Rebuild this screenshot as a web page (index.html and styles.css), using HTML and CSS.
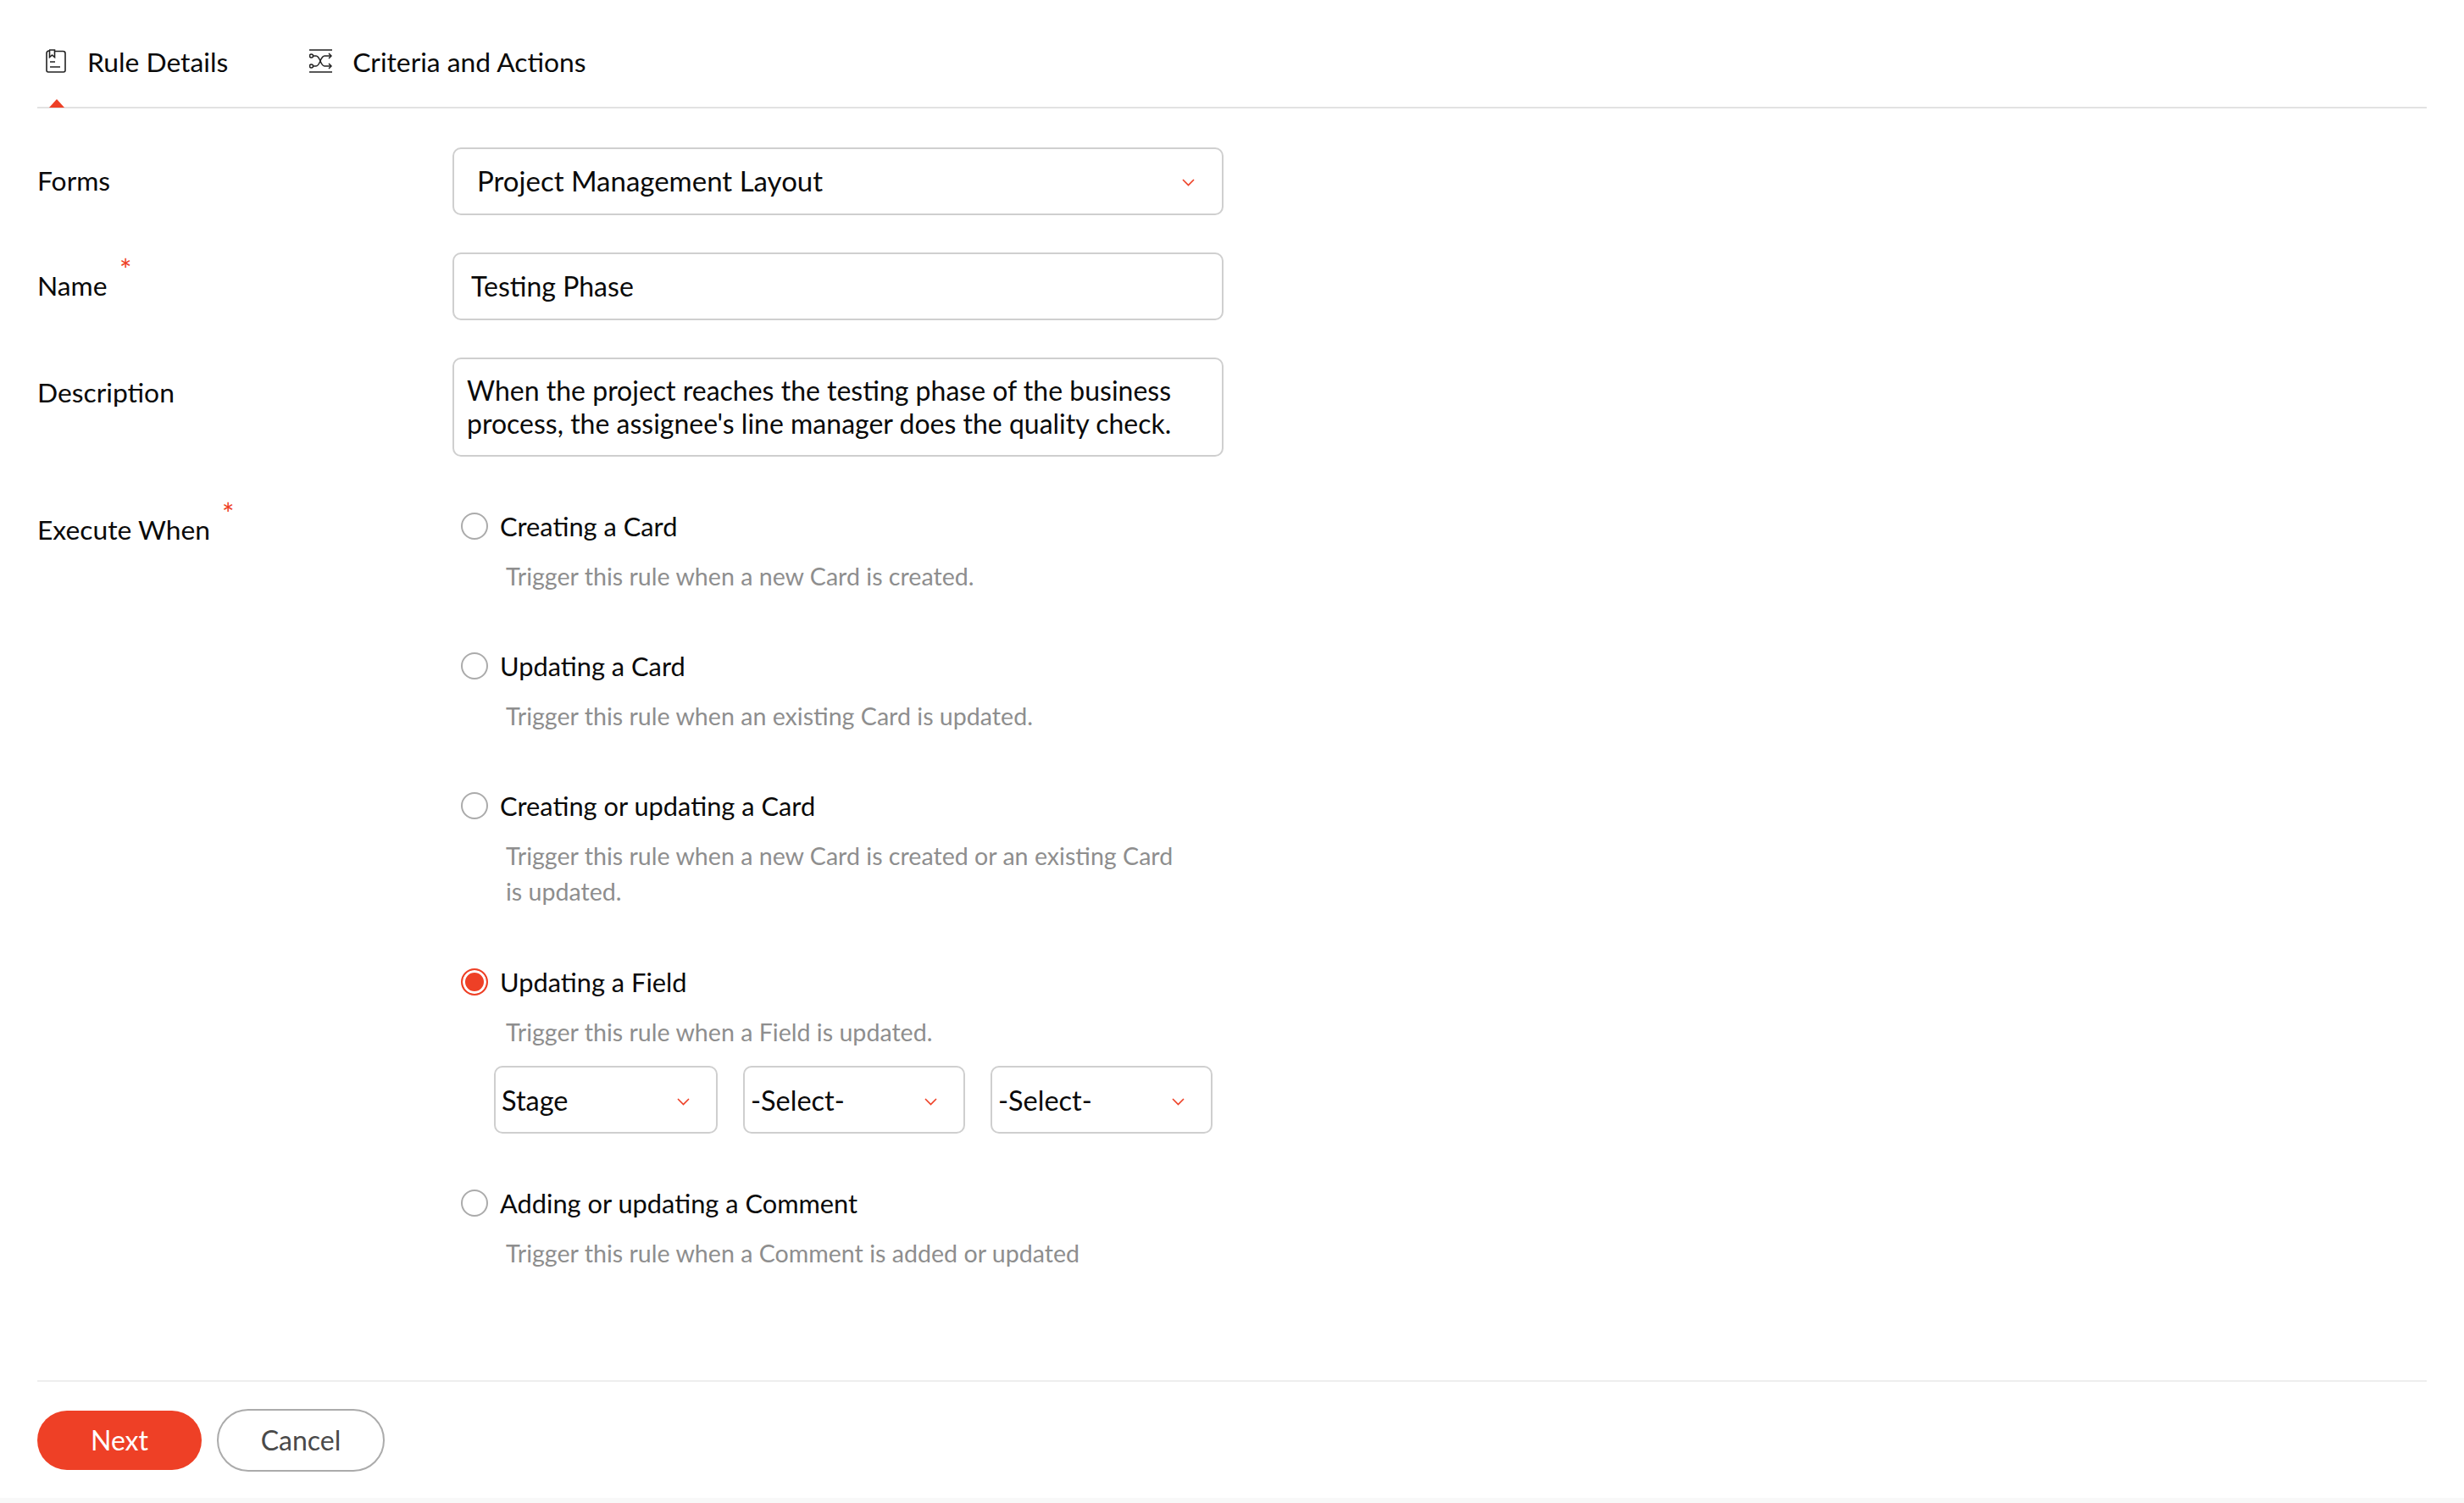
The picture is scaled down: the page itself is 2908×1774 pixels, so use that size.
FILE: index.html
```html
<!DOCTYPE html>
<html lang="en">
<head>
<meta charset="utf-8">
<title>Rule Details</title>
<link rel="stylesheet" href="styles.css">
</head>
<body>
<div class="page">
  <nav class="tabs">
    <div class="tab tab-active">
      <svg class="tab-icon" viewBox="0 0 24 28" fill="none" stroke="#222" stroke-width="1.6">
        <path d="M10.500 2.500H20.500A2.500 2.500 0 0 1 23 5V25A2 2 0 0 1 21 27H3A2 2 0 0 1 1 25V5A3 3 0 0 1 4 2"/>
        <path d="M4 1H10.500V9.500L7.500 7 4.500 9.500V1"/>
        <path d="M5 15H11M5 21H17"/>
      </svg>
      <span>Rule Details</span>
    </div>
    <div class="tab">
      <svg class="tab-icon tab-icon-wide" viewBox="0 0 27 28" fill="none" stroke="#222" stroke-width="1.5">
        <path d="M0 1H27M0 27H27"/>
        <circle cx="2.500" cy="8" r="2"/>
        <circle cx="2.500" cy="20" r="2"/>
        <path d="M4.500 8H8C13 8 13 20 18 20H26M4.500 20H8C13 20 13 8 18 8H26"/>
        <path d="M23 5L26 8 23 11M23 17L26 20 23 23"/>
      </svg>
      <span>Criteria and Actions</span>
    </div>
  </nav>

  <form class="form">
    <div class="row">
      <label class="label">Forms</label>
      <div class="field select select-main"><span>Project Management Layout</span><svg class="chev" viewBox="0 0 15 9"><path d="M1 1l6.500 6.500L14 1"/></svg></div>
    </div>
    <div class="row">
      <label class="label"><span class="req">Name<i class="star star-name">*</i></span></label>
      <div class="field input">Testing Phase</div>
    </div>
    <div class="row">
      <label class="label label-desc">Description</label>
      <div class="field textarea">When the project reaches the testing phase of the business process, the assignee's line manager does the quality check.</div>
    </div>
    <div class="row row-exec">
      <label class="label label-exec"><span class="req">Execute When<i class="star star-exec">*</i></span></label>
      <div class="options">
        <div class="option">
          <div class="opt-head"><span class="radio"></span><span>Creating a Card</span></div>
          <p class="opt-desc">Trigger this rule when a new Card is created.</p>
        </div>
        <div class="option">
          <div class="opt-head"><span class="radio"></span><span>Updating a Card</span></div>
          <p class="opt-desc">Trigger this rule when an existing Card is updated.</p>
        </div>
        <div class="option">
          <div class="opt-head"><span class="radio"></span><span>Creating or updating a Card</span></div>
          <p class="opt-desc">Trigger this rule when a new Card is created or an existing Card is updated.</p>
        </div>
        <div class="option option-field">
          <div class="opt-head"><span class="radio radio-on"></span><span>Updating a Field</span></div>
          <p class="opt-desc">Trigger this rule when a Field is updated.</p>
          <div class="subselects">
            <div class="field select select-sub"><span>Stage</span><svg class="chev" viewBox="0 0 15 9"><path d="M1 1l6.500 6.500L14 1"/></svg></div>
            <div class="field select select-sub"><span>-Select-</span><svg class="chev" viewBox="0 0 15 9"><path d="M1 1l6.500 6.500L14 1"/></svg></div>
            <div class="field select select-sub"><span>-Select-</span><svg class="chev" viewBox="0 0 15 9"><path d="M1 1l6.500 6.500L14 1"/></svg></div>
          </div>
        </div>
        <div class="option">
          <div class="opt-head"><span class="radio"></span><span>Adding or updating a Comment</span></div>
          <p class="opt-desc">Trigger this rule when a Comment is added or updated</p>
        </div>
      </div>
    </div>
  </form>

  <footer class="footer">
    <button class="btn btn-primary" type="button">Next</button>
    <button class="btn btn-secondary" type="button">Cancel</button>
  </footer>
</div>
</body>
</html>
```

FILE: styles.css
```css
* { box-sizing: border-box; }

html, body {
  margin: 0;
  height: 100%;
  background: #fff;
}

body {
  font-family: Lato, "Liberation Sans", sans-serif;
  font-size: 31.8px;
  color: #0a0a0a;
  font-variant-ligatures: common-ligatures;
}

.page {
  display: flex;
  flex-direction: column;
  height: 1774px;
  padding: 0 44px;
  overflow: hidden;
  border-bottom: 6px solid #f8f8f8;
}

.tabs {
  display: flex;
  flex: none;
  height: 128px;
  gap: 86px;
  padding-top: 50px;
  border-bottom: 2px solid #e2e2e2;
}

.tab {
  position: relative;
  display: flex;
  align-items: flex-start;
  gap: 25px;
  height: 46px;
  padding-left: 10px;
  line-height: 46px;
}

.tab-active::after {
  content: "";
  position: absolute;
  left: 14px;
  top: 67px;
  width: 0;
  height: 0;
  border-left: 9px solid transparent;
  border-right: 9px solid transparent;
  border-bottom: 10px solid #ee4026;
}

.tab-icon {
  width: 24px;
  height: 28px;
  margin-top: 8px;
}

.tab-icon-wide { width: 27px; margin-right: -1px; }

.form {
  display: flex;
  flex-direction: column;
  gap: 44px;
  margin-top: 46px;
}

.row {
  display: flex;
  align-items: flex-start;
}

.label {
  width: 490px;
  flex: none;
  line-height: 78px;
}

.label-desc { line-height: 46px; padding-top: 18px; }

.label-exec { line-height: 46px; padding-top: 4px; }

.req { position: relative; }

.star {
  position: absolute;
  top: -23px;
  color: #ee4026;
  font-style: normal;
  font-size: 34px;
  line-height: 46px;
}

.star-name { left: 97px; }
.star-exec { left: 218px; }

.field {
  border: 2px solid #cfcfcf;
  border-radius: 10px;
  background: #fff;
}

.select {
  display: flex;
  align-items: center;
  justify-content: space-between;
  height: 80px;
}

.select-main {
  width: 910px;
  padding: 0 32px 2px 27px;
  font-size: 33px;
}

.input {
  width: 910px;
  height: 80px;
  padding: 0 20px;
  line-height: 76px;
  font-size: 32px;
}

.textarea {
  width: 910px;
  height: 117px;
  padding: 18px 15px 0;
  line-height: 38.500px;
  font-size: 32px;
}

.chev {
  width: 15px;
  height: 9px;
  margin-top: 4px;
  fill: none;
  stroke: #ee4026;
  stroke-width: 1.6;
}

.row-exec { margin-top: 15px; }

.options {
  display: flex;
  flex-direction: column;
  width: 910px;
}

.option { padding-left: 10px; }

.option + .option { margin-top: 62px; }

.option + .option-field { margin-top: 63px; }

.opt-head {
  display: flex;
  align-items: center;
  gap: 14px;
  height: 46px;
  font-size: 30.800px;
}

.radio {
  width: 32px;
  height: 32px;
  flex: none;
  border: 2px solid #ababab;
  border-radius: 50%;
  background: #fff;
}

.radio-on {
  border-color: #ee4026;
  background: #ee4026;
  box-shadow: inset 0 0 0 3px #fff;
}

.opt-desc {
  width: 800px;
  margin: 15px 0 0 53px;
  font-size: 28.600px;
  line-height: 42px;
  color: #8e8e8e;
}

.subselects {
  display: flex;
  gap: 30px;
  margin: 19px 0 -3px 39px;
}

.select-sub {
  width: 262px;
  padding: 0 31px 0 7px;
  font-size: 32.500px;
}

.select-sub:first-child { width: 264px; }

.footer {
  display: flex;
  flex: none;
  align-items: center;
  height: 139px;
  margin-top: auto;
  gap: 18px;
  border-top: 2px solid #eeeeee;
}

.btn {
  height: 70px;
  border-radius: 35px;
  font-family: inherit;
  font-size: 32px;
  padding: 0;
}

.btn-primary {
  width: 194px;
  border: 0;
  background: #ee4026;
  color: #fff;
}

.btn-secondary {
  width: 198px;
  height: 74px;
  border-radius: 37px;
  border: 2px solid #ababab;
  background: #fff;
  color: #4a4a4a;
}
```
